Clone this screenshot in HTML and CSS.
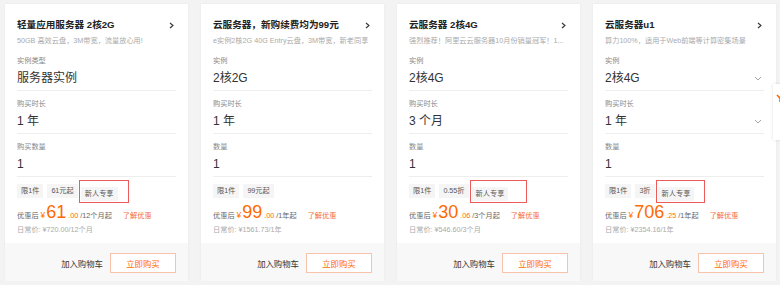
FILE: index.html
```html
<!DOCTYPE html>
<html>
<head>
	<meta charset="utf-8">
	<title>云服务器</title>
	<link rel="stylesheet" href="styles.css">
</head>
<body>
	<div class="cards">
		<div class="card">
			<div class="body">
				<div class="title">轻量应用服务器 2核2G<svg class="arrow" width="5" height="7" viewBox="0 0 5 7"><polyline points="1,1 4,3.5 1,6" fill="none" stroke="#333" stroke-width="1.1"/></svg></div>
				<div class="sub">50GB 高效云盘，3M带宽，流量放心用!</div>
				<div class="field"><div class="label">实例类型</div><div class="value">服务器实例</div></div>
				<div class="field"><div class="label">购买时长</div><div class="value">1 年</div></div>
				<div class="field"><div class="label">购买数量</div><div class="value">1</div></div>
				<div class="tags"><span class="tag">限1件</span><span class="tag">61元起</span><span class="hl"><span class="tag">新人专享</span></span></div>
				<div class="price"><span class="pre">优惠后</span><span class="yen">¥</span><span class="num">61</span><span class="dec">.00</span><span class="unit">/12个月起</span><span class="more">了解优惠</span></div>
				<div class="orig">日常价: ¥720.00/12个月</div>
			</div>
			<div class="foot"><span class="cart">加入购物车</span><span class="buy">立即购买</span></div>
		</div>

		<div class="card">
			<div class="body">
				<div class="title">云服务器，新购续费均为99元<svg class="arrow" width="5" height="7" viewBox="0 0 5 7"><polyline points="1,1 4,3.5 1,6" fill="none" stroke="#333" stroke-width="1.1"/></svg></div>
				<div class="sub">e实例2核2G 40G Entry云盘，3M带宽，新老同享</div>
				<div class="field"><div class="label">实例</div><div class="value">2核2G</div></div>
				<div class="field"><div class="label">购买时长</div><div class="value">1 年</div></div>
				<div class="field"><div class="label">数量</div><div class="value">1</div></div>
				<div class="tags"><span class="tag">限1件</span><span class="tag">99元起</span></div>
				<div class="price"><span class="pre">优惠后</span><span class="yen">¥</span><span class="num">99</span><span class="dec">.00</span><span class="unit">/1年起</span><span class="more">了解优惠</span></div>
				<div class="orig">日常价: ¥1561.73/1年</div>
			</div>
			<div class="foot"><span class="cart">加入购物车</span><span class="buy">立即购买</span></div>
		</div>

		<div class="card">
			<div class="body">
				<div class="title">云服务器 2核4G<svg class="arrow" width="5" height="7" viewBox="0 0 5 7"><polyline points="1,1 4,3.5 1,6" fill="none" stroke="#333" stroke-width="1.1"/></svg></div>
				<div class="sub">强烈推荐！阿里云云服务器10月份销量冠军！1...</div>
				<div class="field"><div class="label">实例</div><div class="value">2核4G</div></div>
				<div class="field"><div class="label">购买时长</div><div class="value">3 个月</div></div>
				<div class="field"><div class="label">数量</div><div class="value">1</div></div>
				<div class="tags"><span class="tag">限1件</span><span class="tag">0.55折</span><span class="hl wide"><span class="tag">新人专享</span></span></div>
				<div class="price"><span class="pre">优惠后</span><span class="yen">¥</span><span class="num">30</span><span class="dec">.06</span><span class="unit">/3个月起</span><span class="more">了解优惠</span></div>
				<div class="orig">日常价: ¥546.60/3个月</div>
			</div>
			<div class="foot"><span class="cart">加入购物车</span><span class="buy">立即购买</span></div>
		</div>

		<div class="card">
			<div class="body">
				<div class="title">云服务器u1<svg class="arrow" width="5" height="7" viewBox="0 0 5 7"><polyline points="1,1 4,3.5 1,6" fill="none" stroke="#333" stroke-width="1.1"/></svg></div>
				<div class="sub">算力100%，适用于Web前端等计算密集场景</div>
				<div class="field"><div class="label">实例</div><div class="value">2核4G<svg class="drop" width="8" height="5" viewBox="0 0 8 5"><polyline points="1,1 4,4 7,1" fill="none" stroke="#999" stroke-width="0.9"/></svg></div></div>
				<div class="field"><div class="label">购买时长</div><div class="value">1 年<svg class="drop" width="8" height="5" viewBox="0 0 8 5"><polyline points="1,1 4,4 7,1" fill="none" stroke="#999" stroke-width="0.9"/></svg></div></div>
				<div class="field"><div class="label">数量</div><div class="value">1</div></div>
				<div class="tags"><span class="tag">限1件</span><span class="tag">3折</span><span class="hl"><span class="tag">新人专享</span></span></div>
				<div class="price"><span class="pre">优惠后</span><span class="yen">¥</span><span class="num">706</span><span class="dec">.25</span><span class="unit">/1年起</span><span class="more">了解优惠</span></div>
				<div class="orig">日常价: ¥2354.16/1年</div>
			</div>
			<div class="foot"><span class="cart">加入购物车</span><span class="buy">立即购买</span></div>
		</div>
	</div>
	<div class="side"><svg width="8" height="8" viewBox="0 0 8 8"><polyline points="1,1 4,4 7,1" fill="none" stroke="#ff6a00" stroke-width="1.6"/><line x1="4" y1="4" x2="4" y2="8" stroke="#ff6a00" stroke-width="1.6"/></svg></div>
</body>
</html>
```

FILE: styles.css
```css
body {
	margin: 0;
	background-color: #f3f3f3;
	font-family: "Liberation Sans", "Noto Sans CJK SC", sans-serif;
	color: #333;
}
.cards {
	display: flex;
	gap: 13px;
	padding: 4px 0 0 5px;
}
.card {
	width: 183px;
	height: 277px;
	background-color: #fff;
	box-shadow: 0 0 2px rgba(0, 0, 0, 0.06);
	display: flex;
	flex-direction: column;
}
.body {
	padding: 14px 12px 0;
}
.title {
	font-size: 9.6px;
	font-weight: bold;
	line-height: 14px;
	color: #222;
	display: flex;
	justify-content: space-between;
	align-items: center;
	padding-right: 2px;
}
.sub {
	margin-top: 3px;
	font-size: 7.2px;
	line-height: 11px;
	color: #aaa;
	white-space: nowrap;
}
.field {
	margin-top: 2px;
	padding: 8px 0 4px;
	border-bottom: 1px solid #eee;
}
.field + .field {
	margin-top: 0;
}
.label {
	font-size: 7.2px;
	line-height: 10px;
	color: #888;
}
.value {
	margin-top: 4px;
	font-size: 12px;
	line-height: 16px;
	color: #333;
	display: flex;
	justify-content: space-between;
	align-items: center;
}
.drop {
	margin-right: 2px;
}
.tags {
	margin-top: 5px;
	height: 18px;
	display: flex;
	align-items: center;
	gap: 4px;
}
.tag {
	display: inline-block;
	height: 14px;
	line-height: 14px;
	padding: 0 4px;
	font-size: 7.2px;
	color: #555;
	background-color: #f5f5f5;
}
.hl {
	display: inline-block;
	border: 1px solid #ee5a5a;
	padding: 1px 10px 1px 1px;
	margin-left: -3px;
}
.hl.wide {
	padding-right: 18px;
}
.price {
	margin-top: 2px;
	height: 20px;
	line-height: 20px;
	white-space: nowrap;
}
.pre,
.unit {
	font-size: 7.2px;
	color: #666;
}
.yen {
	font-size: 8.4px;
	color: #ff6a00;
	margin: 0 1px 0 2px;
}
.num {
	font-size: 18px;
	color: #ff6a00;
}
.dec {
	font-size: 7.2px;
	color: #ff6a00;
	margin: 0 2px 0 2px;
}
.more {
	font-size: 7.2px;
	color: #f5683d;
	margin-left: 11px;
}
.orig {
	margin-top: 3px;
	font-size: 7.2px;
	line-height: 10px;
	color: #aaa;
}
.foot {
	margin-top: auto;
	height: 38px;
	background-color: #f8f8f8;
	display: flex;
	justify-content: flex-end;
	align-items: center;
	gap: 7px;
	padding-right: 12px;
	padding-top: 1px;
	box-sizing: border-box;
}
.cart {
	font-size: 8.4px;
	color: #333;
}
.buy {
	width: 66px;
	height: 20px;
	box-sizing: border-box;
	border: 1px solid #f9c2ab;
	background-color: #fff;
	color: #ff6a00;
	font-size: 8.4px;
	display: flex;
	justify-content: center;
	align-items: center;
}
.side {
	position: absolute;
	left: 773px;
	top: 84px;
	width: 30px;
	height: 56px;
	background-color: #fff;
	box-shadow: 0 0 3px rgba(0, 0, 0, 0.12);
	padding: 4px 0 0 3px;
	box-sizing: border-box;
}
```
